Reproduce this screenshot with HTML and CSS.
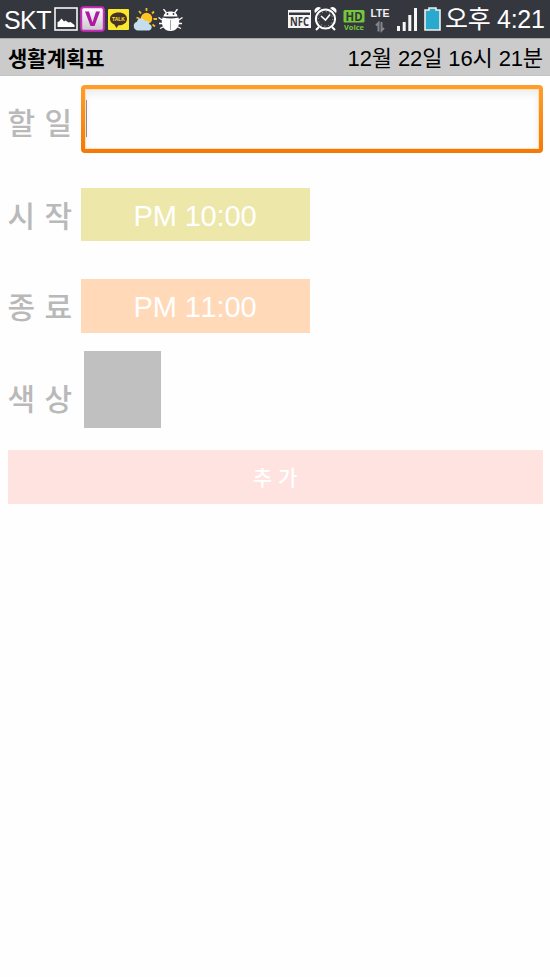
FILE: index.html
```html
<!DOCTYPE html>
<html lang="ko">
<head>
<meta charset="utf-8">
<title>생활계획표</title>
<link rel="stylesheet" href="styles.css">
</head>
<body>
<header class="status">
  <span class="carrier">SKT</span>
  <svg class="icon-picture" width="24" height="24" viewBox="0 0 24 24"><rect x="1" y="1" width="22" height="22" fill="none" stroke="#f5f5f5" stroke-width="1.6"/><path d="M3.500 20v-5l1.500-.5 2.500-3 2.500 3 1.500-1 3 2 2-.5 4 3v2z" fill="#fff"/></svg>
  <svg class="icon-v" width="25" height="26" viewBox="0 0 25 26"><defs><linearGradient id="v" x2="0" y2="1"><stop stop-color="#fff"/><stop offset="1" stop-color="#c7c7cd"/></linearGradient></defs><rect x="1.2" y="1.2" width="22.6" height="23.600" rx="2.500" fill="url(#v)" stroke="#cd2bbd" stroke-width="2"/><path d="M5 5.500h4l3.500 11L16 5.500h4L14.500 20h-4z" fill="#ae18a2"/></svg>
  <svg class="icon-talk" width="21" height="21" viewBox="0 0 21 21"><rect width="21" height="21" rx="1" fill="#f9e92c"/><path d="M10.500 3.500c-5 0-8.500 2.600-8.500 6.400 0 2.500 1.600 4.500 4.300 5.500L8.500 19l2-2.700c5-.1 8.500-2.600 8.500-6.400 0-3.800-3.500-6.400-8.500-6.400z" fill="#493329"/><text x="10.500" y="12" text-anchor="middle" textLength="13" lengthAdjust="spacingAndGlyphs" class="talk-label">TALK</text></svg>
  <svg class="icon-weather" width="24" height="24" viewBox="0 0 24 24"><path d="M13.500 0v3M6 3l2 2.500M21 3.500l-2 2M24 11h-3.500M22 18.500l-2.500-2M3.500 9.500l3 1" stroke="#f7bc23" stroke-width="1.800"/><circle cx="13.500" cy="10.500" r="5.700" fill="#ffc421"/><path d="M5 22.500a4.500 4.500 0 0 1-1-8.800c.6-4 6.300-4.600 7.800-.9 3.200-.6 4.500 1.300 4 3.200C20 16.500 19.500 22.500 15.500 22.500z" fill="#c5deed"/></svg>
  <svg class="icon-bug" width="25" height="23" viewBox="0 0 25 23"><path d="M5.500 0l3 4M19.500 0l-3 4M5 11.500L.5 8.500M4.500 14.500H1M6 17.500l-4 2M20 11.500l4.500-3M20.500 14.500H24M19 17.500l4 2" stroke="#fff" stroke-width="1.300"/><path d="M5.500 7.500C6 .8 19 .8 19.500 7.500z" fill="#fff"/><path d="M4.500 8.500q8 2 16 0c2.200 7-1 13.500-8 13.500S2.300 15.500 4.500 8.500z" fill="#fff"/><path d="M12.500 11v10" stroke="#8b8c92" stroke-width=".8"/><circle cx="9.500" cy="5" r=".9" fill="#35373f"/><circle cx="15.500" cy="5" r=".9" fill="#35373f"/></svg>
  <svg class="icon-nfc" width="23" height="18" viewBox="0 0 23 18"><path d="M0 0h23v18H0z" fill="#f5f5f5"/><path d="M1 2.500h21v2.500H1z" fill="#35373f"/><text x="11.500" y="16" text-anchor="middle" textLength="19" lengthAdjust="spacingAndGlyphs" class="nfc-label">NFC</text></svg>
  <svg class="icon-alarm" width="23" height="24" viewBox="0 0 23 24"><path d="M1 6a4 4 0 0 1 6-5zM22 6a4 4 0 0 0-6-5z" fill="#fff"/><path d="M5 20l-3 3M18 20l3 3" stroke="#fff" stroke-width="2"/><circle cx="11.500" cy="12" r="9.600" fill="none" stroke="#fff" stroke-width="2"/><circle cx="11.500" cy="12" r="7.200" fill="none" stroke="#c9c9cc" stroke-width=".9" stroke-dasharray="1 2.770"/><path d="M7 9l4.500 4L16 7.500" fill="none" stroke="#fff" stroke-width="1.600"/></svg>
  <svg class="icon-hd" width="23" height="22" viewBox="0 0 23 22"><rect x=".5" width="21" height="12.500" rx="1.500" fill="#75c83b"/><text x="11" y="10.700" text-anchor="middle" textLength="17" lengthAdjust="spacingAndGlyphs" class="hd-label">HD</text><text x="11" y="19.500" text-anchor="middle" textLength="20" lengthAdjust="spacingAndGlyphs" class="voice-label">Voice</text></svg>
  <svg class="icon-lte" width="20" height="25" viewBox="0 0 20 25"><text x="10" y="8.500" text-anchor="middle" textLength="19" lengthAdjust="spacingAndGlyphs" class="lte-label">LTE</text><path d="M8.500 23.500V15L6 17.500M11.500 14v8.500l2.500-2.500" fill="none" stroke="#85868b" stroke-width="2"/></svg>
  <svg class="icon-signal" width="21" height="23" viewBox="0 0 21 23"><path d="M0 18h3v5H0zM5.700 14h3v9h-3zM11.300 7h3v16h-3zM17 0h3v23h-3z" fill="#f7f7f7"/></svg>
  <svg class="icon-battery" width="17" height="24" viewBox="0 0 17 24"><path d="M1 3h4V1h7v2h4v20H1z" fill="#2aa9cf" stroke="#f1eee9" stroke-width="1.600"/></svg>
  <span class="clock">오후 4:21</span>
</header>
<div class="titlebar"><strong>생활계획표</strong><span class="date">12월 22일 16시 21분</span></div>
<main>
  <div class="row task"><label>할 일</label><div class="field"><div class="field-inner"><i class="caret"></i></div></div></div>
  <div class="row start"><label>시 작</label><div class="time">PM 10:00</div></div>
  <div class="row end"><label>종 료</label><div class="time">PM 11:00</div></div>
  <div class="row color"><label>색 상</label><div class="swatch"></div></div>
  <div class="add">추 가</div>
</main>
</body>
</html>
```
FILE: styles.css
```css
* { box-sizing: border-box; }
body {
  margin: 0;
  height: 977px;
  background: #fefefe;
  font-family: "Liberation Sans", "Noto Sans CJK KR", sans-serif;
  font-kerning: none;
  white-space: nowrap;
  overflow: hidden;
}
svg { display: block; flex: none; }
.status {
  display: flex;
  height: 38px;
  padding-left: 4px;
  background: #35373f;
  color: #fff;
}
.carrier { width: 50px; font-size: 25px; line-height: 41px; letter-spacing: -0.6px; }
.icon-picture { margin: 7px 0 0 0; }
.icon-v { margin: 6px 0 0 2px; }
.icon-talk { margin: 9px 0 0 3px; }
.icon-weather { margin: 8px 0 0 4px; }
.icon-bug { margin: 9px 0 0 1px; }
.icon-nfc { margin: 10px 0 0 105px; }
.icon-alarm { margin: 7px 0 0 3px; }
.icon-hd { margin: 10px 0 0 6px; }
.icon-lte { margin: 8px 0 0 4px; }
.icon-signal { margin: 8px 0 0 7px; }
.icon-battery { margin: 7px 0 0 6px; }
.talk-label { font: bold 5.5px "Liberation Sans", sans-serif; fill: #f9e92c; }
.nfc-label { font: bold 11.5px "Open Sans", sans-serif; fill: #35373f; }
.hd-label { font: bold 12px "Open Sans", sans-serif; fill: #35373f; }
.voice-label { font: bold 7px "Open Sans", sans-serif; fill: #75c83b; }
.lte-label { font: bold 10.5px "Liberation Sans", sans-serif; fill: #f0f0f0; }
.clock { margin-left: 4px; font-size: 25px; line-height: 39px; letter-spacing: -0.3px; }
.titlebar {
  display: flex;
  justify-content: space-between;
  height: 38px;
  padding: 0 7px 0 8px;
  border-top: 1px solid #a9a9aa;
  border-bottom: 1px solid #c3c3c3;
  background: #cbcbcb;
  color: #000;
  line-height: 40px;
}
.titlebar strong { font-size: 21px; }
.date { font-size: 22px; letter-spacing: -0.12px; }
main { padding: 9px 7.5px 0 7.5px; }
.row { display: flex; }
label { width: 73px; color: #b9b9b9; font-size: 30px; font-weight: 500; line-height: 57px; word-spacing: 1px; }
.task { height: 68px; }
.task label { padding-top: 10px; }
.field {
  flex: 1;
  height: 68px;
  padding: 4px;
  border-radius: 4px;
  background: linear-gradient(#ff9e2c, #f47805);
}
.field-inner {
  height: 60px;
  border: 1px solid #ffe0b8;
  background: #fefefe;
  box-shadow: inset 0 4px 7px #eeeeee;
}
.caret { display: block; width: 1px; height: 37px; margin-top: 10px; background: #8c8c8c; }
.start { margin-top: 35px; }
.end { margin-top: 38px; }
.time { width: 229px; height: 53px; font-size: 29px; line-height: 57px; text-align: center; color: #fff; letter-spacing: -0.15px; }
.start .time { background: #ede7aa; }
.end .time { height: 54px; background: #ffd9b8; }
.start, .end { height: 53px; }
.color { height: 77px; margin-top: 19px; }
.color label { padding-top: 20px; }
.swatch { width: 77px; height: 77px; margin-left: 3px; background: #c0c0c0; }
.add { height: 54px; margin-top: 22px; background: #ffe3e0; color: #fff; font-size: 21px; font-weight: 500; line-height: 56px; text-align: center; }
```
